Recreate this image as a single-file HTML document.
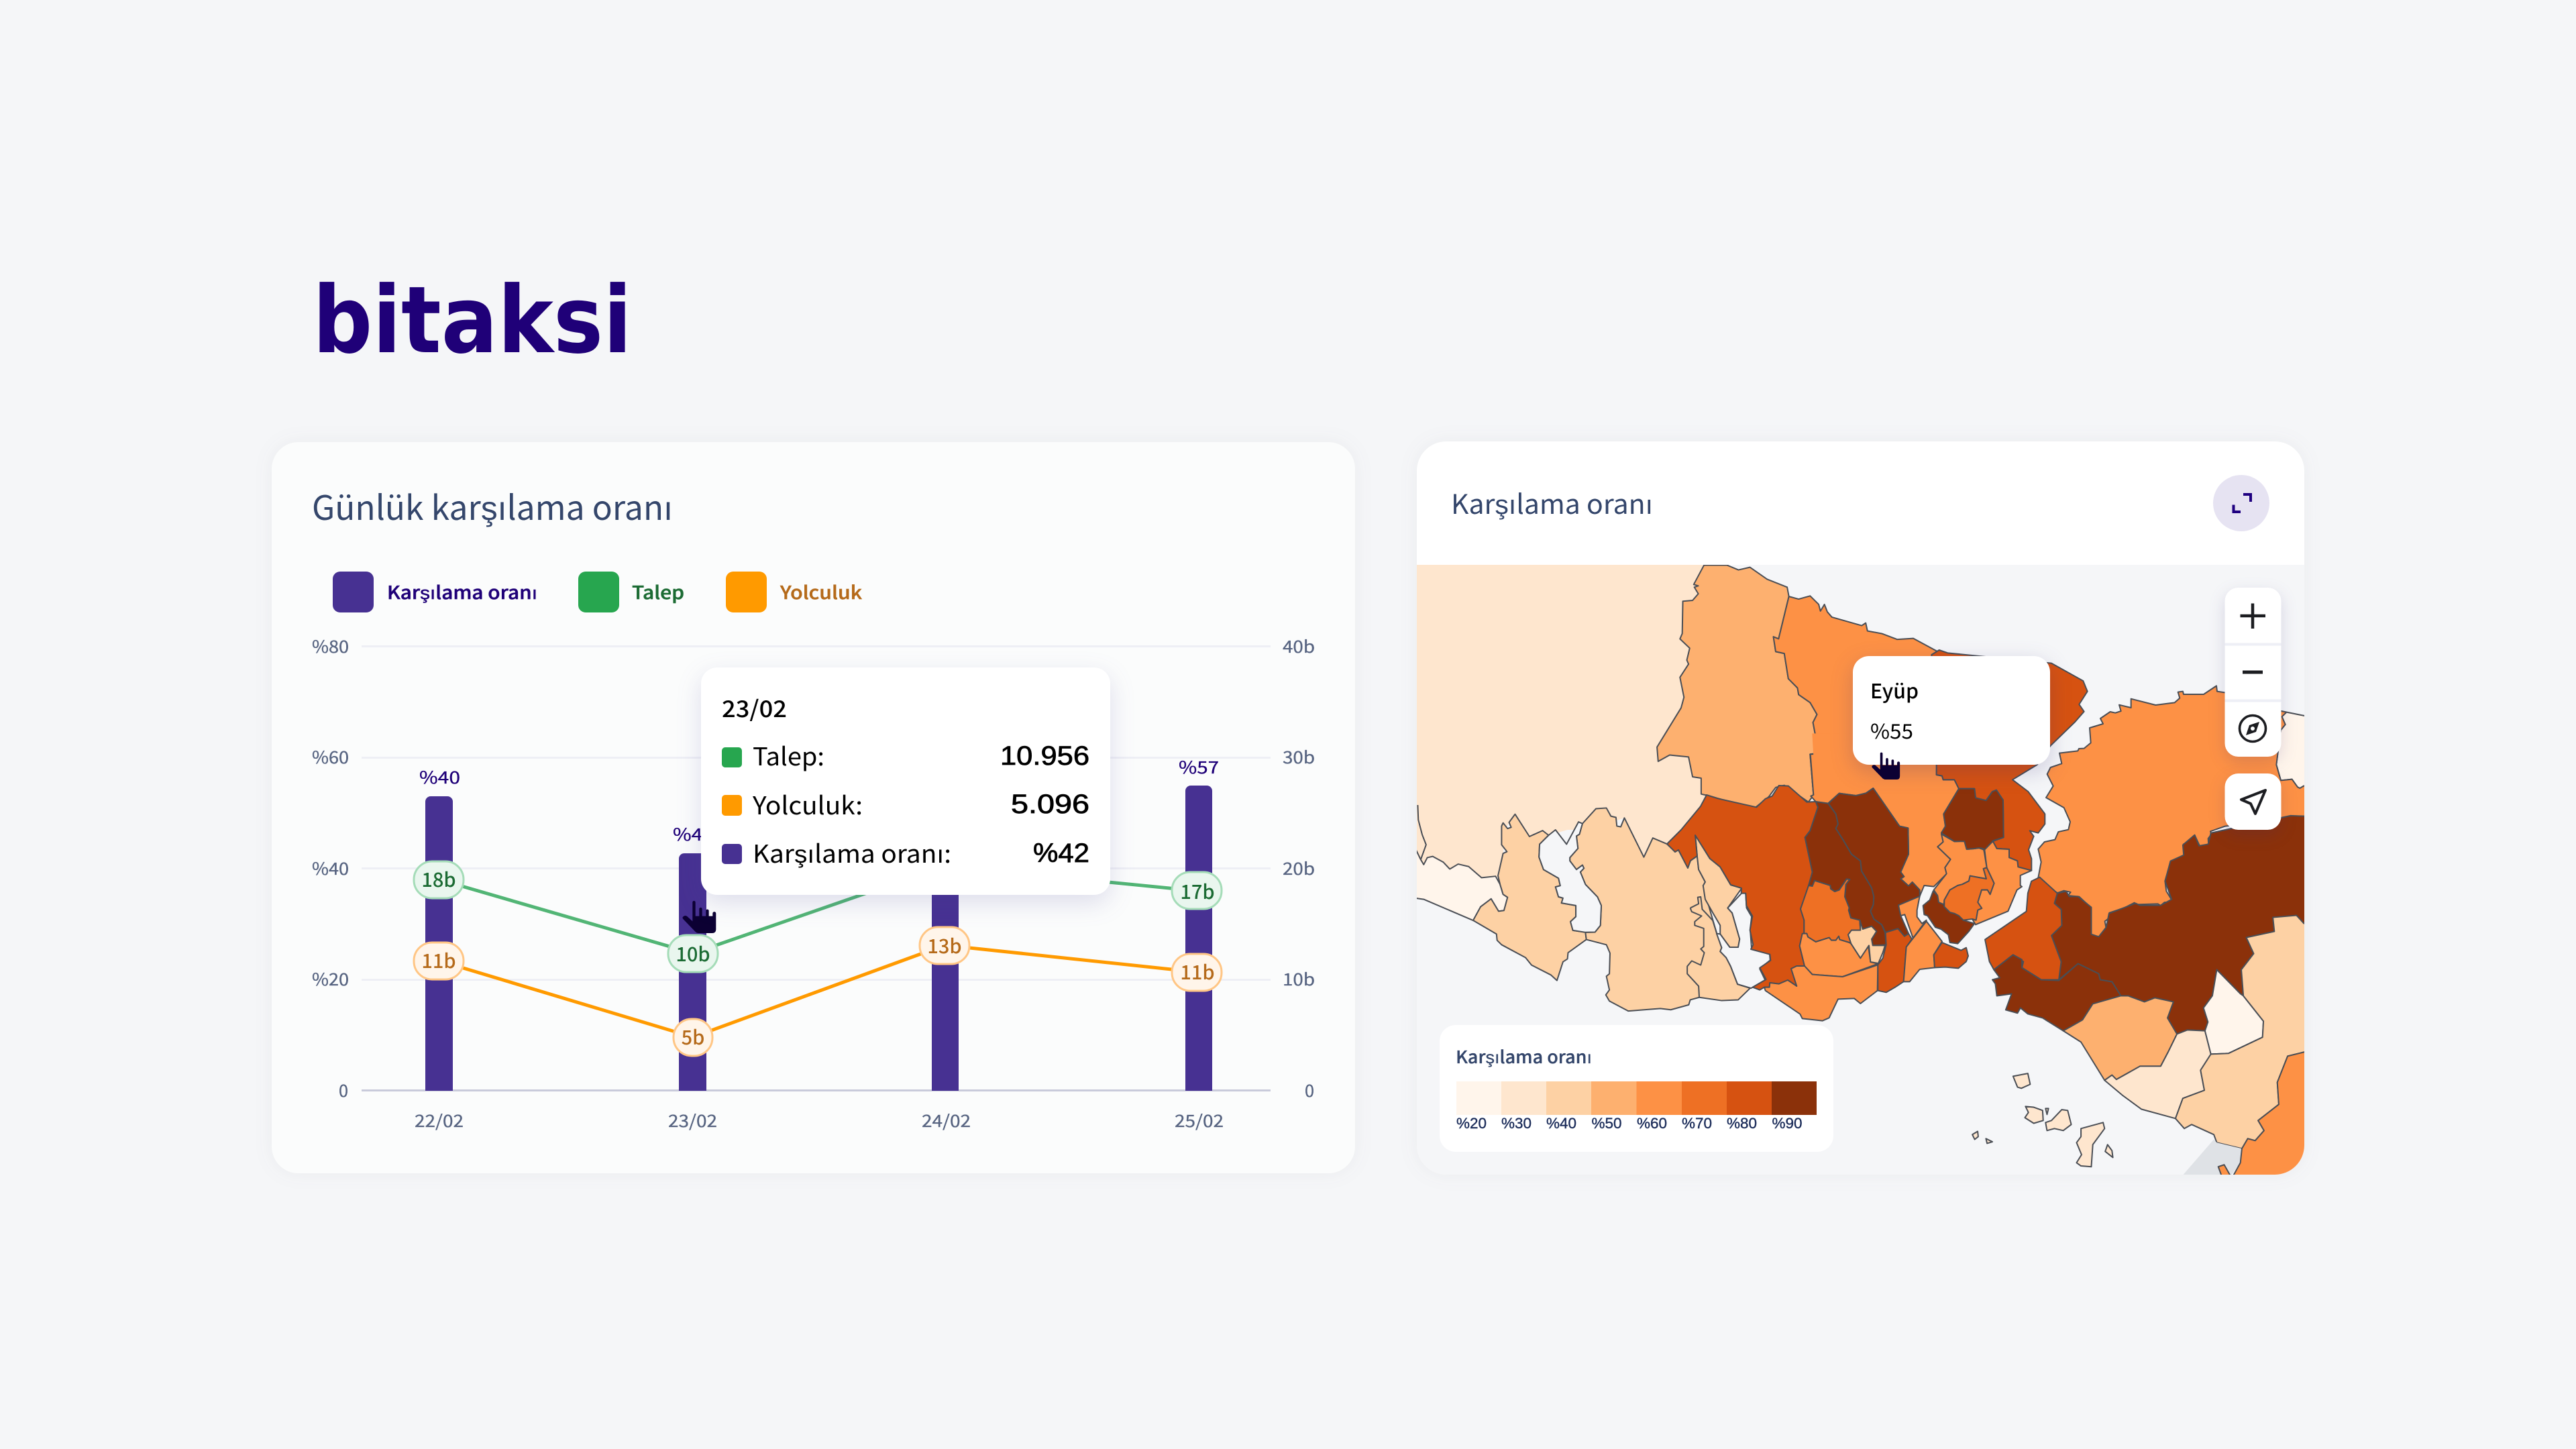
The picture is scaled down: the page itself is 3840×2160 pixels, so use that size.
<!DOCTYPE html>
<html lang="tr">
<head>
<meta charset="utf-8">
<title>bitaksi</title>
<style>
html,body{margin:0;padding:0;width:3840px;height:2160px;background:#f5f6f8;overflow:hidden}
svg{display:block}
text{font-family:"Noto Sans CJK JP","Liberation Sans",sans-serif;white-space:pre}
.lib{font-family:"Liberation Sans","Noto Sans CJK JP",sans-serif}
.dj{font-family:"DejaVu Sans","Liberation Sans",sans-serif}
.m polygon,.m polyline,.m path{stroke:#4a4e55;stroke-width:2;stroke-linejoin:round;vector-effect:non-scaling-stroke}
.m polyline{fill:none}
.ax{font-size:25px;fill:#566380;stroke:#566380;stroke-width:.3px}
.bl{font-size:25px;fill:#1f0078;stroke:#1f0078;stroke-width:.3px}
.bd{font-size:29px;font-weight:500;text-anchor:middle}
.g{fill:#1b6b33}.o{fill:#b56a1a}
.c1{fill:#fff5eb}.c2{fill:#fee6ce}.c3{fill:#fdd1a4}.c4{fill:#fdb06f}.c5{fill:#fd9145}.c6{fill:#ee7024}.c7{fill:#d65211}.c8{fill:#8b310a}
.w{fill:#f5f6f8}
.lbl{font-size:22px;fill:#1c2d5a;stroke:#1c2d5a;stroke-width:.4px}
</style>
</head>
<body>
<svg xmlns="http://www.w3.org/2000/svg" width="3840" height="2160" viewBox="0 0 3840 2160">
<defs>
<clipPath id="mapclip"><path d="M2112 842H3435V1707a44 44 0 0 1-44 44H2156a44 44 0 0 1-44-44Z"/></clipPath>
</defs>
<rect width="3840" height="2160" fill="#f5f6f8"/>

<!-- logo -->
<text class="dj" x="466" y="525" font-size="138" font-weight="700" fill="#1f0078" textLength="476" lengthAdjust="spacingAndGlyphs">bitaksi</text>

<!-- left card -->
<rect x="405" y="659" width="1615" height="1090" rx="40" fill="#fbfcfc" style="filter:drop-shadow(0 0 14px rgba(60,60,90,.06))"/>
<text x="465" y="775" font-size="50" fill="#34466b" textLength="538" lengthAdjust="spacingAndGlyphs">Günlük karşılama oranı</text>

<rect x="496" y="852" width="61" height="61" rx="11" fill="#473192"/>
<text x="577" y="893" font-size="27" font-weight="500" fill="#1f0078" stroke="#1f0078" stroke-width=".5" textLength="224" lengthAdjust="spacingAndGlyphs">Karşılama oranı</text>
<rect x="862" y="852" width="61" height="61" rx="11" fill="#27a64f"/>
<text x="942" y="893" font-size="27" font-weight="500" fill="#1b6b33" stroke="#1b6b33" stroke-width=".5" textLength="78" lengthAdjust="spacingAndGlyphs">Talep</text>
<rect x="1082" y="852" width="61" height="61" rx="11" fill="#ff9a00"/>
<text x="1163" y="893" font-size="27" font-weight="500" fill="#b56a1a" stroke="#b56a1a" stroke-width=".5" textLength="122" lengthAdjust="spacingAndGlyphs">Yolculuk</text>

<!-- grid -->
<g fill="#eeeff5">
<rect x="539" y="962" width="1355" height="3"/>
<rect x="539" y="1128" width="1355" height="3"/>
<rect x="539" y="1293" width="1355" height="3"/>
<rect x="539" y="1459" width="1355" height="3"/>
</g>
<rect x="539" y="1624" width="1355" height="3" fill="#c9cbdb"/>

<g>
<text class="ax" x="465" y="973" textLength="55" lengthAdjust="spacingAndGlyphs">%80</text>
<text class="ax" x="465" y="1138" textLength="55" lengthAdjust="spacingAndGlyphs">%60</text>
<text class="ax" x="465" y="1304" textLength="55" lengthAdjust="spacingAndGlyphs">%40</text>
<text class="ax" x="465" y="1469" textLength="55" lengthAdjust="spacingAndGlyphs">%20</text>
<text class="ax" x="505" y="1635" textLength="14" lengthAdjust="spacingAndGlyphs">0</text>
<text class="ax" x="1912" y="973" textLength="48" lengthAdjust="spacingAndGlyphs">40b</text>
<text class="ax" x="1912" y="1138" textLength="48" lengthAdjust="spacingAndGlyphs">30b</text>
<text class="ax" x="1912" y="1304" textLength="48" lengthAdjust="spacingAndGlyphs">20b</text>
<text class="ax" x="1912" y="1469" textLength="48" lengthAdjust="spacingAndGlyphs">10b</text>
<text class="ax" x="1945" y="1635" textLength="14" lengthAdjust="spacingAndGlyphs">0</text>
<text class="ax" x="618" y="1680" textLength="73" lengthAdjust="spacingAndGlyphs">22/02</text>
<text class="ax" x="996" y="1680" textLength="73" lengthAdjust="spacingAndGlyphs">23/02</text>
<text class="ax" x="1374" y="1680" textLength="73" lengthAdjust="spacingAndGlyphs">24/02</text>
<text class="ax" x="1751" y="1680" textLength="73" lengthAdjust="spacingAndGlyphs">25/02</text>
</g>

<!-- bars -->
<g fill="#473192">
<path d="M634 1626V1195a8 8 0 0 1 8-8h25a8 8 0 0 1 8 8V1626Z"/>
<path d="M1012 1626V1280a8 8 0 0 1 8-8h25a8 8 0 0 1 8 8V1626Z"/>
<path d="M1389 1626V1230a8 8 0 0 1 8-8h24a8 8 0 0 1 8 8V1626Z"/>
<path d="M1767 1626V1179a8 8 0 0 1 8-8h24a8 8 0 0 1 8 8V1626Z"/>
</g>
<text class="bl" x="625" y="1168" textLength="61" lengthAdjust="spacingAndGlyphs">%40</text>
<text class="bl" x="1003" y="1253" textLength="61" lengthAdjust="spacingAndGlyphs">%42</text>
<text class="bl" x="1757" y="1153" textLength="60" lengthAdjust="spacingAndGlyphs">%57</text>

<!-- lines -->
<polyline points="654,1311 1033,1421 1408,1291 1784,1328" fill="none" stroke="#52b575" stroke-width="5"/>
<polyline points="654,1432 1033,1546 1408,1409 1784,1449" fill="none" stroke="#ff9a00" stroke-width="5"/>

<!-- badges -->
<g stroke-width="3">
<rect x="617" y="1284" width="74" height="55" rx="27" fill="#e9f6ee" stroke="#a5dcb8"/>
<rect x="996" y="1394" width="74" height="55" rx="27" fill="#e9f6ee" stroke="#a5dcb8"/>
<rect x="1747" y="1300" width="74" height="55" rx="27" fill="#e9f6ee" stroke="#a5dcb8"/>
<rect x="617" y="1405" width="74" height="55" rx="27" fill="#fff5ea" stroke="#ffc685"/>
<rect x="1004" y="1519" width="58" height="55" rx="27" fill="#fff5ea" stroke="#ffc685"/>
<rect x="1371" y="1382" width="74" height="55" rx="27" fill="#fff5ea" stroke="#ffc685"/>
<rect x="1747" y="1422" width="74" height="55" rx="27" fill="#fff5ea" stroke="#ffc685"/>
</g>
<text class="bd g" x="654" y="1322">18b</text>
<text class="bd g" x="1033" y="1433">10b</text>
<text class="bd g" x="1785" y="1340">17b</text>
<text class="bd o" x="654" y="1443">11b</text>
<text class="bd o" x="1033" y="1557">5b</text>
<text class="bd o" x="1408" y="1421">13b</text>
<text class="bd o" x="1785" y="1460">11b</text>

<!-- hand 1 -->
<g transform="translate(1010,1335) scale(.3333)">
<path fill="#0c0033" d="M67 30a6.500 6.500 0 0 1 13 0V92H97V60a6.500 6.500 0 0 1 13 0V92H127V68a6.500 6.500 0 0 1 13 0V92H157V80a7.500 7.500 0 0 1 15 0V150Q172 168 155 168H95Q85 168 78 160L25 105Q18 97 30 91Q38 88 45 95L67 115Z"/>
</g>

<!-- chart tooltip -->
<rect x="1045" y="995" width="610" height="339" rx="24" fill="#fff" style="filter:drop-shadow(0 12px 18px rgba(70,60,150,.16))"/>
<text x="1076" y="1069" font-size="34" font-weight="500" fill="#000" textLength="97" lengthAdjust="spacingAndGlyphs">23/02</text>
<rect x="1076" y="1114" width="30" height="30" rx="5" fill="#27a64f"/>
<rect x="1076" y="1185" width="30" height="31" rx="5" fill="#ff9a00"/>
<rect x="1076" y="1258" width="30" height="30" rx="5" fill="#473192"/>
<text x="1122" y="1141" font-size="37" fill="#000" textLength="107" lengthAdjust="spacingAndGlyphs">Talep:</text>
<text x="1122" y="1214" font-size="37" fill="#000" textLength="164" lengthAdjust="spacingAndGlyphs">Yolculuk:</text>
<text x="1122" y="1286" font-size="37" fill="#000" textLength="296" lengthAdjust="spacingAndGlyphs">Karşılama oranı:</text>
<g class="vals">
<text class="lib" x="1491" y="1140" font-size="40" fill="#000" stroke="#000" stroke-width=".8" textLength="133" lengthAdjust="spacingAndGlyphs">10.956</text>
<text class="lib" x="1507" y="1212" font-size="40" fill="#000" stroke="#000" stroke-width=".8" textLength="117" lengthAdjust="spacingAndGlyphs">5.096</text>
<text class="lib" x="1540" y="1285" font-size="40" fill="#000" stroke="#000" stroke-width=".8" textLength="84" lengthAdjust="spacingAndGlyphs">%42</text>
</g>

<!-- right card -->
<path d="M2156 658H3391a44 44 0 0 1 44 44V1707a44 44 0 0 1-44 44H2156a44 44 0 0 1-44-44V702a44 44 0 0 1 44-44Z" fill="#fff" style="filter:drop-shadow(0 0 14px rgba(60,60,90,.06))"/>
<text x="2163" y="766" font-size="40" fill="#34466b" textLength="301" lengthAdjust="spacingAndGlyphs">Karşılama oranı</text>
<circle cx="3341" cy="750" r="42" fill="#e6e3f2"/>
<path d="M3344 737H3355V748M3329.500 752.500V763H3340" fill="none" stroke="#1f0080" stroke-width="4"/>

<!-- map -->
<g clip-path="url(#mapclip)">
<rect x="2112" y="842" width="1323" height="909" fill="#f5f6f8"/>
<g class="m">
<!-- Z5 space: west -->
<g transform="translate(2100,1200) scale(.4464,.37)">
<polygon class="c2" points="20,-970 1010,-970 1010,100 862,157 785,210 720,52 600,100 530,100 467,122 403,127 355,37 320,100 310,300 290,287 243,293 200,248 165,238 137,258 115,230 80,207 62,212 50,240 40,220 20,170" style="stroke:none"/>
<polyline points="30,0 32,60 45,120 58,160 40,220"/>
<polygon class="c1" points="20,375 50,380 215,465 240,410 275,378 300,428 318,425 330,372 315,360 305,320 290,287 243,293 200,248 165,238 137,258 115,230 80,207 62,212 50,240 40,220 20,170"/>
<polygon class="c3" points="215,465 240,410 275,378 300,428 318,425 330,372 315,360 305,320 298,285 315,195 328,188 310,160 310,85 315,72 330,95 342,90 335,70 355,37 403,127 447,103 467,122 437,158 435,210 450,260 500,295 506,325 490,330 500,370 515,375 510,395 558,405 558,450 540,470 548,505 590,513 593,542 532,595 530,620 515,632 495,707 475,685 410,645 390,615 310,563 295,545 293,520"/>
<polygon class="c3" points="580,75 625,15 660,12 675,45 692,50 695,85 708,88 720,52 785,210 815,133 862,157 890,188 900,180 932,253 940,225 963,205 968,260 990,310 983,325 1005,420 1028,515 1045,575 1040,590 1060,615 1075,650 1098,722 1140,738 1100,785 1045,788 970,775 940,785 935,805 875,825 840,820 733,830 670,790 658,765 670,745 660,690 670,680 672,597 660,563 593,542 590,513 622,512 640,485 643,405 630,370 590,320 573,270 585,255 580,242 560,260 538,225 538,212 565,175 560,125 570,118"/>
<polyline points="940,415 968,398 965,372 975,370 980,420 1015,465 1028,515"/>
<polyline points="940,415 945,430 978,447 955,470 955,485 985,497 985,570 975,580 987,595 975,645 945,628 930,650 930,680 968,730 970,775"/>
<polygon class="c3" points="957,122 1005,215 1040,250 1075,322 1112,335 1065,415 1080,435 1105,540 1100,573 1072,573 1040,520 1040,485 1018,440 990,380 983,325 990,310 968,260 963,205"/>
<polygon class="w" points="467,122 490,100 527,158 567,68 580,75 570,118 560,125 565,175 538,212 538,225 560,260 580,242 585,255 573,270 590,320 630,370 643,405 640,485 622,512 590,513 548,505 540,470 558,450 558,405 510,395 515,375 500,370 490,330 506,325 500,295 450,260 435,210 437,158"/>
<polygon class="w" points="1112,355 1125,355 1128,415 1145,450 1140,500 1145,580 1205,600 1207,625 1172,660 1190,705 1143,738 1098,722 1075,650 1060,615 1040,590 1045,575 1028,518 1040,520 1072,573 1100,573 1105,540 1080,435 1065,415"/>
</g>
<!-- Z4 space: north -->
<g transform="translate(2100,640) scale(.8547,.3954)">
<polygon class="c4" points="515,512 555,512 575,530 595,520 625,565 660,595 663,630 645,790 636,782 640,838 655,845 662,940 678,975 680,1000 700,1030 712,1075 705,1105 712,1185 710,1222 700,1225 706,1380 697,1405 655,1342 640,1350 628,1385 605,1425 545,1395 520,1380 510,1375 510,1315 495,1310 488,1235 455,1228 435,1252 433,1198 475,1050 480,1010 473,935 488,885 485,870 490,825 473,790 477,770 478,648 495,645 505,620 498,595 505,590 497,585"/>
<polygon class="c5" points="663,630 680,640 700,628 715,660 718,685 725,660 730,688 738,708 790,740 797,730 800,760 825,770 852,792 880,788 920,835 940,850 940,1300 710,1400 706,1380 700,1225 710,1222 712,1185 705,1105 712,1075 700,1030 680,1000 678,975 662,940 655,845 640,838 636,782 645,790"/>
</g>
<!-- M space: centre -->
<g transform="translate(2560,1130) scale(.33333)">
<polygon class="c5" points="416,-17 985,-60 980,75 1005,80 1010,97 1060,97 1080,137 1012,250 1020,305 1002,335 1010,375 985,397 1043,453 1018,490 1026,517 968,575 925,570 905,618 905,590 872,555 855,572 820,540 835,530 820,510 855,430 853,313 815,305 697,135 665,157 620,168 545,158 495,203 440,195 418,170 430,165"/>
<polygon class="c5" style="stroke:none" points="424,-110 975,-110 972,100 690,125 540,150 440,165"/>
<polygon class="c7" points="-225,384 -162,321 -75,216 -48,165 0,180 20,185 175,220 215,182 245,170 275,123 318,125 400,197 440,195 450,220 415,325 392,355 425,510 410,570 372,675 388,725 388,785 368,840 390,930 355,930 330,942 355,1020 315,993 275,1010 235,1005 233,1025 210,1025 190,1037 158,1025 218,990 190,938 238,905 235,878 150,855 160,835 146,770 157,707 130,660 127,605 107,605 108,582 60,567 12,486 -33,450 -99,345 -90,438 -120,459 -132,492 -174,411 -189,420"/>
<polygon class="c8" points="440,195 495,203 530,250 540,295 530,315 565,370 600,430 640,460 645,505 690,580 700,620 698,655 685,685 700,720 735,745 750,780 755,835 695,838 690,810 712,775 690,752 650,770 637,725 597,715 587,680 590,670 570,620 575,565 592,543 578,541 545,590 525,597 507,585 505,570 435,548 425,573 408,570 425,510 392,355 415,325 450,220"/>
<polygon class="c8" points="497,203 545,158 620,168 665,157 697,135 815,305 853,313 855,430 820,510 835,530 820,540 855,572 872,555 905,590 905,618 810,658 838,700 820,705 855,785 837,797 808,763 752,780 735,745 700,720 685,685 698,655 700,620 690,580 645,505 640,460 600,430 565,370 530,315 540,295 530,250"/>
<polygon class="c6" points="408,570 425,573 435,548 505,570 507,585 525,597 545,590 578,541 592,543 575,565 570,620 590,670 587,680 597,715 637,725 640,770 600,770 585,790 600,830 590,825 547,812 543,797 530,815 510,815 500,803 440,822 405,800 400,785 388,785 388,725 372,675"/>
<polygon class="c5" points="380,785 400,785 405,800 440,822 500,803 510,815 530,815 543,797 547,812 590,825 598,830 640,895 650,875 675,838 685,912 718,920 560,978 425,968 390,930 368,840"/>
<polygon class="c3" points="637,725 650,765 690,752 712,775 690,810 695,838 750,838 740,870 720,918 685,912 678,838 640,895 598,830 585,790 600,770 640,770"/>
<polygon class="c5" points="390,930 425,968 560,978 718,925 716,1040 640,1098 612,1075 540,1078 500,1162 470,1175 380,1165 370,1145 215,1040 210,1025 233,1025 235,1005 275,1010 315,993 355,1020 330,942 355,930"/>
<polygon class="c7" points="718,925 740,895 755,835 752,780 808,763 837,797 855,785 870,810 845,845 833,1000 795,1025 755,1048 718,1040"/>
<polygon class="c5" points="845,845 935,730 1005,820 968,880 972,937 905,945 860,1000 833,1000"/>
<polygon class="c5" points="810,658 905,618 893,680 893,710 915,740 935,725 875,805 838,700 820,705"/>
<polygon class="c7" points="1005,825 1090,860 1113,848 1122,885 1113,910 1078,940 1020,935 972,937 968,880"/>
<polygon class="c8" points="965,595 985,615 990,645 1013,655 1015,665 1040,690 1060,695 1080,705 1100,725 1150,740 1125,775 1075,830 1040,825 1033,790 1000,765 975,757 940,705 925,700 920,660 950,635"/>
<polygon class="c5" points="968,590 1025,517 1018,490 1043,453 985,397 1010,375 1002,340 1060,373 1105,372 1115,408 1150,405 1170,402 1192,410 1205,490 1190,495 1203,540 1175,535 1130,527 1125,550 1095,565 1075,570 1040,590 1015,635 1013,655 990,645 985,615"/>
<polygon class="c7" points="980,-60 980,75 1005,80 1010,97 1060,97 1080,137 1150,137 1155,178 1202,190 1230,150 1248,143 1278,188 1280,355 1232,372 1250,405 1305,408 1305,445 1342,460 1345,487 1405,503 1405,450 1392,410 1415,350 1397,325 1435,335 1465,295 1465,250 1390,150 1320,97 1430,30 1490,-55 1600,-162 1640,-208 1618,-240 1655,-298 1636,-345 1494,-424 1030,-470 992,-483 958,-462"/>
<polygon class="c8" points="1080,137 1150,137 1155,178 1202,190 1230,150 1248,143 1278,188 1280,355 1232,370 1195,425 1190,405 1170,402 1150,405 1115,408 1105,372 1060,373 1002,335 1020,305 1012,250"/>
<polygon class="c6" points="1015,635 1040,590 1075,570 1095,565 1125,550 1130,527 1175,535 1203,540 1190,495 1205,490 1238,560 1220,610 1208,590 1182,590 1165,645 1183,672 1165,680 1157,725 1140,720 1100,725 1080,705 1060,695 1040,690 1015,665"/>
<polygon class="c5" points="1205,490 1195,410 1232,372 1250,405 1305,408 1305,445 1342,460 1345,487 1405,503 1355,525 1355,570 1362,575 1340,590 1300,685 1155,745 1140,720 1157,725 1165,680 1183,672 1165,645 1182,590 1208,590 1220,610 1238,560"/>
</g>
<!-- Z9 space: east -->
<g transform="translate(2980,1000) scale(.33333)">
<polygon class="c1" points="1262,180 1450,218 1450,500 1362,515 1345,525 1335,520 1310,485 1260,490 1240,420 1245,380 1260,265 1280,240 1265,205 1285,185"/>
<polygon class="c5" points="590,125 700,153 785,142 808,122 800,95 822,92 825,105 915,105 972,67 975,92 1010,97 1100,100 1262,180 1285,185 1265,205 1280,240 1260,265 1245,380 1240,420 1260,490 1310,485 1335,520 1345,525 1362,515 1450,500 1450,640 1362,650 1305,660 1250,670 1010,695 945,718 950,730 935,750 937,780 898,785 875,735 860,760 825,775 828,825 768,850 742,940 748,985 772,1025 765,1035 740,1035 722,1050 710,1042 615,1045 605,1037 560,1060 493,1082 493,1105 473,1120 480,1157 447,1190 412,1180 412,1060 358,1010 308,1005 320,990 290,983 262,993 235,980 175,925 188,855 175,797 203,765 250,755 265,720 310,710 318,675 290,612 210,567 242,515 215,462 230,432 280,415 270,368 352,358 357,348 380,347 410,322 405,255 465,237 453,213 497,183 520,188 545,180 537,152 590,165"/>
</g>
<!-- Z6 space: south-east -->
<g transform="translate(2750,840) scale(.4401,.5995)">
<polygon class="c8" points="1620,630 1510,627 1240,670 1232,695 1230,698 1200,702 1185,675 1145,700 1148,725 1103,740 1085,790 1107,835 1070,850 1000,850 985,845 895,870 885,905 860,928 835,922 835,855 790,828 760,828 750,815 720,820 710,845 733,860 735,900 700,925 733,990 725,1035 790,995 860,1020 865,1035 905,1040 935,1075 960,1075 1015,1090 1050,1080 1113,1090 1093,1130 1125,1170 1160,1160 1220,1162 1230,1140 1215,1105 1245,1075 1260,1010 1340,1070 1350,1075 1343,1010 1385,970 1360,930 1455,915 1450,880 1530,875 1555,895 1620,910"/>
<polygon class="c7" points="660,780 720,820 710,845 733,860 735,900 700,925 733,990 725,1035 665,1035 600,1005 605,990 570,973 505,1010 490,990 475,935 615,865 620,820 632,790"/>
<polygon class="c8" points="505,1010 570,973 600,985 600,1005 665,1035 725,1037 790,995 860,1020 865,1035 905,1040 935,1075 840,1095 805,1135 740,1162 670,1130 620,1120 595,1105 585,1118 545,1110 565,1070 515,1075 510,1045 500,1035 525,1030"/>
<polygon class="c4" points="740,1162 805,1135 840,1095 935,1075 960,1075 1015,1090 1050,1080 1113,1090 1093,1130 1125,1170 1095,1215 1070,1250 1000,1250 920,1283 905,1272 880,1285 800,1190"/>
<polygon class="c2" points="880,1285 905,1272 920,1283 1000,1250 1070,1250 1095,1215 1125,1170 1160,1160 1220,1162 1240,1220 1205,1260 1218,1310 1145,1330 1120,1380 1005,1357 940,1322"/>
<polygon class="c1" points="1260,1010 1340,1070 1350,1075 1418,1138 1415,1178 1300,1218 1240,1220 1220,1162 1230,1140 1215,1105 1245,1075"/>
<polygon class="c3" points="1620,910 1555,895 1530,875 1450,880 1455,915 1360,930 1385,970 1343,1010 1350,1075 1418,1138 1415,1178 1300,1218 1240,1220 1205,1260 1218,1310 1145,1330 1120,1380 1150,1405 1175,1395 1250,1420 1260,1440 1345,1455 1365,1430 1390,1435 1420,1410 1400,1385 1470,1345 1465,1290 1500,1225 1555,1215 1620,1205"/>
<polygon style="fill:#dfe2e6;stroke:none" points="1140,1525 1250,1432 1260,1440 1345,1455 1340,1490 1305,1525"/>
<polygon class="c5" points="1620,1205 1555,1215 1500,1225 1465,1290 1470,1345 1400,1385 1420,1410 1390,1435 1365,1430 1345,1455 1340,1490 1310,1530 1620,1530"/>
<polygon class="c5" points="1265,1500 1285,1495 1312,1530 1280,1530"/>
<polygon class="c2" points="570,1275 620,1268 628,1295 598,1305 585,1302"/>
<polygon class="c2" points="612,1350 640,1352 670,1360 672,1385 640,1392 610,1378 622,1365"/>
<polygon class="c2" points="680,1355 690,1355 685,1370"/>
<polygon class="c2" points="680,1390 700,1385 735,1358 755,1360 767,1395 740,1410 710,1405 685,1410"/>
<polygon class="c2" points="800,1405 875,1390 880,1405 840,1445 835,1500 800,1498 785,1490 802,1470 785,1440 800,1425"/>
<polygon class="c2" points="890,1445 905,1460 908,1477 882,1462"/>
<polygon class="c2" points="432,1420 450,1412 452,1425 440,1432"/>
<polygon class="c2" points="478,1430 500,1438 482,1442"/>
</g>
</g>
</g>

<!-- map legend -->
<rect x="2146" y="1528" width="587" height="189" rx="24" fill="#fff"/>
<text x="2170" y="1585" font-size="26" font-weight="500" fill="#34466b" stroke="#34466b" stroke-width=".3" textLength="203" lengthAdjust="spacingAndGlyphs">Karşılama oranı</text>
<rect class="c1" x="2171" y="1612" width="67.500" height="50"/>
<rect class="c2" x="2238" y="1612" width="67.500" height="50"/>
<rect class="c3" x="2305" y="1612" width="67.500" height="50"/>
<rect class="c4" x="2372" y="1612" width="67.500" height="50"/>
<rect class="c5" x="2439.500" y="1612" width="67.500" height="50"/>
<rect class="c6" x="2507" y="1612" width="67.500" height="50"/>
<rect class="c7" x="2574" y="1612" width="67.500" height="50"/>
<rect class="c8" x="2641" y="1612" width="67" height="50"/>
<g>
<text class="lib lbl" x="2171" y="1682" textLength="45" lengthAdjust="spacingAndGlyphs">%20</text>
<text class="lib lbl" x="2238" y="1682" textLength="45" lengthAdjust="spacingAndGlyphs">%30</text>
<text class="lib lbl" x="2305" y="1682" textLength="45" lengthAdjust="spacingAndGlyphs">%40</text>
<text class="lib lbl" x="2372.500" y="1682" textLength="45" lengthAdjust="spacingAndGlyphs">%50</text>
<text class="lib lbl" x="2440" y="1682" textLength="45" lengthAdjust="spacingAndGlyphs">%60</text>
<text class="lib lbl" x="2507" y="1682" textLength="45" lengthAdjust="spacingAndGlyphs">%70</text>
<text class="lib lbl" x="2574" y="1682" textLength="45" lengthAdjust="spacingAndGlyphs">%80</text>
<text class="lib lbl" x="2641.500" y="1682" textLength="45" lengthAdjust="spacingAndGlyphs">%90</text>
</g>

<!-- map controls -->
<rect x="3316.500" y="876" width="84" height="252" rx="20" fill="#fff" style="filter:drop-shadow(0 8px 12px rgba(50,40,120,.16))"/>
<rect x="3316.500" y="1153" width="84" height="84" rx="20" fill="#fff" style="filter:drop-shadow(0 8px 12px rgba(50,40,120,.16))"/>
<rect x="3316.500" y="958.500" width="84" height="4" fill="#eeeff6"/>
<rect x="3316.500" y="1042.500" width="84" height="4" fill="#eeeff6"/>
<path d="M3339.500 918H3377M3358 899.500V937" fill="none" stroke="#1c1d21" stroke-width="4.500"/>
<path d="M3343 1002H3373" fill="none" stroke="#1c1d21" stroke-width="5"/>
<circle cx="3358" cy="1086" r="19.500" fill="none" stroke="#1c1d21" stroke-width="3.600"/>
<path d="M3368 1076L3363 1091L3348 1096L3353 1081Z" fill="#1c1d21"/>
<circle cx="3358" cy="1086" r="3" fill="#fff"/>
<path d="M3377 1178L3341 1192L3355 1198L3362 1213Z" fill="none" stroke="#1c1d21" stroke-width="4" stroke-linejoin="round"/>

<!-- map tooltip -->
<rect x="2762" y="978" width="294" height="162" rx="24" fill="#fff" style="filter:drop-shadow(0 10px 16px rgba(50,40,120,.22))"/>
<text x="2788" y="1041" font-size="30" font-weight="500" fill="#000" textLength="72" lengthAdjust="spacingAndGlyphs">Eyüp</text>
<text x="2788" y="1101" font-size="30" fill="#000" textLength="64" lengthAdjust="spacingAndGlyphs">%55</text>
<g transform="translate(2784,1115) scale(.28)">
<path fill="#0c0033" d="M67 30a6.500 6.500 0 0 1 13 0V92H97V60a6.500 6.500 0 0 1 13 0V92H127V68a6.500 6.500 0 0 1 13 0V92H157V80a7.500 7.500 0 0 1 15 0V150Q172 168 155 168H95Q85 168 78 160L25 105Q18 97 30 91Q38 88 45 95L67 115Z"/>
</g>
</svg>
</body>
</html>
